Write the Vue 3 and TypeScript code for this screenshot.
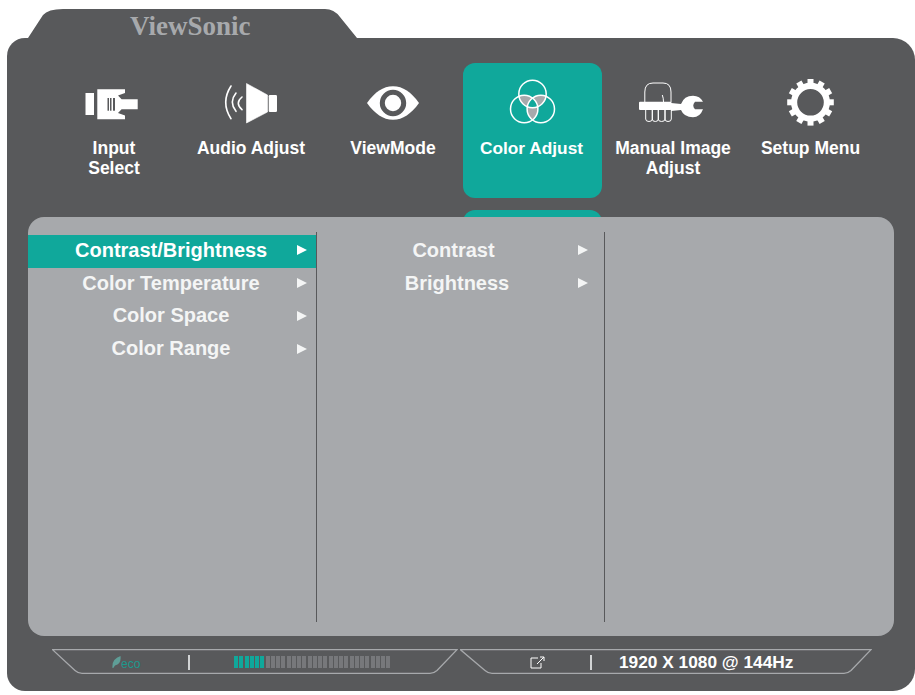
<script setup lang="ts">
const navItems = [
  { id: 'input', label: 'Input\nSelect' },
  { id: 'audio', label: 'Audio Adjust' },
  { id: 'view', label: 'ViewMode' },
  { id: 'color', label: 'Color Adjust', active: true },
  { id: 'manual', label: 'Manual Image\nAdjust' },
  { id: 'setup', label: 'Setup Menu' },
]

const mainMenu = ['Contrast/Brightness', 'Color Temperature', 'Color Space', 'Color Range']
const subMenu = ['Contrast', 'Brightness']

const gearTeeth = Array.from({ length: 12 }, (_, i) => i * 30)
const meterBars = Array.from({ length: 30 }, (_, i) => i < 6)
</script>

<template>
  <div class="osd">
    <div class="tab">ViewSonic</div>

    <div class="frame">
      <nav class="nav">
        <div v-for="item in navItems" :key="item.id" class="nav-col" :class="'nav-' + item.id">
          <div class="nav-item" :class="{ active: item.active }">
            <svg class="nav-icon" viewBox="0 0 64 50" aria-hidden="true">
              <!-- input: plug -->
              <g v-if="item.id === 'input'" fill="#fff">
                <rect x="3.500" y="15" width="8.500" height="22" />
                <path d="M15.300 11.300H43V15L36 17.500L39.600 21.300H55.700V31.300H39.600L36 35L43 37.500V41.300H15.300Z" />
                <g fill="#58595b">
                  <rect x="25.500" y="20" width="1.500" height="12.700" />
                  <rect x="28" y="20" width="1.500" height="12.700" />
                  <rect x="31" y="20" width="2" height="12.700" />
                </g>
              </g>
              <!-- audio: speaker -->
              <g v-else-if="item.id === 'audio'">
                <path d="M27.500 5.500L48.500 17V34L27.500 45Z" fill="#fff" stroke="#fff" stroke-width="0.600" stroke-linejoin="round" />
                <rect x="49.700" y="17" width="8.300" height="17" rx="1.200" fill="#fff" />
                <g fill="none" stroke="#fff" stroke-width="1.600" stroke-linecap="round">
                  <path d="M12 8Q1.400 24.400 12 40.700" />
                  <path d="M17 15Q9.600 24.200 17 33.300" />
                  <path d="M23 19Q15.600 25 23 31.700" />
                </g>
              </g>
              <!-- viewmode: eye -->
              <g v-else-if="item.id === 'view'">
                <path d="M6 25C14 14 22 8.300 32 8.300S50 14 58 25C50 36 42 41.700 32 41.700S14 36 6 25Z" fill="#fff" />
                <circle cx="32" cy="25" r="10.700" fill="#fff" stroke="#58595b" stroke-width="5" />
              </g>
              <!-- color adjust: three circles -->
              <g v-else-if="item.id === 'color'">
                <defs>
                  <clipPath id="clip-top"><circle cx="31.500" cy="16" r="13.700" /></clipPath>
                  <clipPath id="clip-left"><circle cx="23.200" cy="31" r="13.700" /></clipPath>
                  <clipPath id="clip-top-left" clip-path="url(#clip-top)"><circle cx="23.200" cy="31" r="13.700" /></clipPath>
                </defs>
                <g fill="#a7a9ac">
                  <circle cx="23.200" cy="31" r="13.700" clip-path="url(#clip-top)" />
                  <circle cx="39.800" cy="31" r="13.700" clip-path="url(#clip-top)" />
                  <circle cx="39.800" cy="31" r="13.700" clip-path="url(#clip-left)" />
                </g>
                <circle cx="39.800" cy="31" r="13.700" fill="#10a89b" clip-path="url(#clip-top-left)" />
                <g fill="none" stroke="#fff" stroke-width="1.500">
                  <circle cx="31.500" cy="16" r="13.700" />
                  <circle cx="23.200" cy="31" r="13.700" />
                  <circle cx="39.800" cy="31" r="13.700" />
                </g>
              </g>
              <!-- manual: hand and wrench -->
              <g v-else-if="item.id === 'manual'">
                <path d="M3.800 24V14Q3.800 5 12 5H22Q30 5 30 14V24" fill="none" stroke="#fff" stroke-width="1" />
                <rect x="-2" y="23.700" width="32.500" height="8.300" rx="1" fill="#fff" />
                <g fill="none" stroke="#fff" stroke-width="1">
                  <path d="M4.700 32V41Q4.700 43.500 8 43.500Q11.300 43.500 11.300 41V32" />
                  <path d="M11.300 32V41Q11.300 43.500 14.300 43.500Q17.300 43.500 17.300 41V32" />
                  <path d="M17.300 32V41Q17.300 43.500 20.600 43.500Q24 43.500 24 41V32" />
                  <path d="M24 32V41Q24 43.500 27 43.500Q30.300 43.500 30.300 41V32" />
                  <path d="M21.300 17Q22.500 20 22.500 24" />
                </g>
                <path d="M30 25L40 26Q43 17.700 52 17.700Q59 17.700 62 23.700H54Q50.500 27.500 54 31.300H62Q59 39.300 52 39.300Q43 39.300 40 32L30 33Z" fill="#fff" />
              </g>
              <!-- setup: gear -->
              <g v-else fill="#fff">
                <path d="M31.500 4.800A19.500 19.500 0 1 0 31.500 43.800A19.500 19.500 0 1 0 31.500 4.800ZM31.500 11A13.300 13.300 0 1 1 31.500 37.600A13.300 13.300 0 1 1 31.500 11Z" fill-rule="evenodd" />
                <rect v-for="angle in gearTeeth" :key="angle" x="28.500" y="1" width="6" height="6" :transform="`rotate(${angle} 31.500 24.300)`" />
              </g>
            </svg>
            <span class="nav-label">{{ item.label }}</span>
          </div>
          <div v-if="item.active" class="nav-peek"></div>
        </div>
      </nav>

      <section class="panel">
        <ul class="menu menu-main">
          <li v-for="(entry, i) in mainMenu" :key="entry" class="menu-row" :class="{ selected: i === 0 }">
            <span class="menu-label">{{ entry }}</span>
            <span class="menu-arrow"></span>
          </li>
        </ul>
        <ul class="menu menu-sub">
          <li v-for="entry in subMenu" :key="entry" class="menu-row">
            <span class="menu-label">{{ entry }}</span>
            <span class="menu-arrow"></span>
          </li>
        </ul>
        <div class="menu menu-empty"></div>
      </section>

      <footer class="status">
        <div class="status-seg seg-left">
          <svg class="seg-outline" viewBox="0 0 406 26" aria-hidden="true">
            <path d="M0.500 0.700H405L385 21.500Q382 24.300 378 24.300H30Q26 24.300 23 21.500Z" fill="none" stroke="#a7a9ac" stroke-width="1.300" />
          </svg>
          <span class="eco">
            <svg class="eco-leaf" viewBox="0 0 9 12" aria-hidden="true">
              <path d="M0.500 12Q-0.500 3 8.500 0Q9.500 8 3 9.500L1.300 12Z" fill="#5f9e97" />
            </svg>
            <span class="eco-text">eco</span>
          </span>
          <span class="seg-divider"></span>
          <span class="meter">
            <i v-for="(on, i) in meterBars" :key="i" :class="{ on }"></i>
          </span>
        </div>
        <div class="status-seg seg-right">
          <svg class="seg-outline" viewBox="0 0 412 26" aria-hidden="true">
            <path d="M0.500 0.700H411L391 21.500Q388 24.300 384 24.300H32Q28 24.300 25 21.500Z" fill="none" stroke="#a7a9ac" stroke-width="1.300" />
          </svg>
          <svg class="link-icon" viewBox="0 0 15 13" aria-hidden="true">
            <path d="M8 2H1V12H11V7M7 8L14 1M10 1H14V5" fill="none" stroke="#fff" stroke-width="1" />
          </svg>
          <span class="seg-divider"></span>
          <span class="resolution">1920 X 1080 @ 144Hz</span>
        </div>
      </footer>
    </div>
  </div>
</template>

<style>
html,
body {
  margin: 0;
  background: #fff;
}
</style>

<style scoped>
.osd {
  width: 915px;
  height: 695px;
  box-sizing: border-box;
  padding: 9px 0 4px 7px;
  display: flex;
  flex-direction: column;
  font-family: "Liberation Sans", Arial, sans-serif;
  overflow: hidden;
}

.tab {
  margin-left: 21px;
  width: 330px;
  height: 29px;
  flex: none;
  background: #58595b;
  clip-path: path("M0 29 L15 6 Q20 0 35 0 L297 0 Q306 0 312 8 L329 29 Z");
  color: #a7a9ac;
  font-family: "Liberation Serif", serif;
  font-weight: 700;
  font-size: 27px;
  line-height: 35px;
  padding-left: 102px;
  box-sizing: border-box;
}

.frame {
  flex: 1;
  display: flex;
  flex-direction: column;
  background: #58595b;
  border-radius: 18px 22px 22px 18px;
}

.nav {
  height: 179px;
  flex: none;
  overflow: hidden;
  box-sizing: border-box;
  padding: 25px 0 0 39px;
  display: grid;
  grid-template-columns: 136px 138px 143px 139px 139px 139px;
}

.nav-view,
.nav-manual {
  padding-left: 3px;
}

.nav-item {
  height: 135px;
  border-radius: 12px;
  padding-top: 15px;
  box-sizing: border-box;
  display: flex;
  flex-direction: column;
  align-items: center;
  color: #fff;
}

.nav-item.active {
  background: #10a89b;
}

.nav-peek {
  margin-top: 12px;
  height: 40px;
  border-radius: 12px;
  background: #10a89b;
}

.nav-icon {
  width: 64px;
  height: 50px;
  flex: none;
  overflow: visible;
}

.nav-label {
  margin-top: 10px;
  font-size: 17.500px;
  line-height: 20px;
  font-weight: 700;
  text-align: center;
  white-space: pre-line;
}

.nav-color .nav-label {
  font-size: 17.300px;
  margin-right: 2px;
}

.panel {
  margin-left: 21px;
  width: 866px;
  height: 419px;
  flex: none;
  box-sizing: border-box;
  padding: 15px 0 14px;
  background: #a7a9ac;
  border-radius: 16px;
  display: flex;
}

.menu {
  margin: 0;
  padding: 3px 0 0;
  list-style: none;
  box-sizing: border-box;
  width: 288px;
  flex: none;
  border-right: 1px solid #58595b;
}

.menu-main {
  width: 289px;
}

.menu-empty {
  border-right: 0;
}

.menu-row {
  height: 32.800px;
  box-sizing: border-box;
  display: flex;
  align-items: center;
  gap: 30px;
  padding: 0 9px 2px 47px;
  color: #f4f5f5;
  font-size: 20px;
  font-weight: 700;
}

.menu-sub .menu-row {
  padding: 0 16px 2px 49px;
}

.menu-sub .menu-row:first-child .menu-label {
  padding-right: 7px;
}

.menu-row.selected {
  background: #10a89b;
  color: #fff;
}

.menu-label {
  flex: 1;
  text-align: center;
}

.menu-arrow {
  width: 0;
  height: 0;
  border-left: 10px solid currentColor;
  border-top: 5.500px solid transparent;
  border-bottom: 5.500px solid transparent;
}

.status {
  flex: 1;
  display: flex;
  gap: 2px;
  padding: 13px 0 0 45px;
}

.status-seg {
  position: relative;
  height: 26px;
  display: flex;
  align-items: center;
}

.seg-left {
  width: 406px;
}

.seg-right {
  width: 412px;
}

.seg-outline {
  position: absolute;
  inset: 0;
  width: 100%;
  height: 100%;
}

.eco {
  margin-left: 60px;
  width: 76px;
  display: flex;
  align-items: flex-end;
  color: #10a89b;
}

.eco-leaf {
  width: 9px;
  height: 12px;
}

.eco-text {
  font-size: 12px;
  line-height: 11px;
  margin-bottom: -2px;
  opacity: 0.8;
}

.seg-divider {
  width: 1.500px;
  height: 15px;
  background: #d1d3d4;
  flex: none;
}

.meter {
  margin-left: 44.500px;
  display: flex;
  gap: 1.250px;
}

.meter i {
  width: 4px;
  height: 12px;
  background: #77787b;
}

.meter i.on {
  background: #10a89b;
}

.link-icon {
  margin-left: 70px;
  margin-right: 45px;
  width: 15px;
  height: 13px;
}

.resolution {
  margin-left: 27.500px;
  color: #fff;
  font-size: 17.300px;
  font-weight: 700;
}
</style>
